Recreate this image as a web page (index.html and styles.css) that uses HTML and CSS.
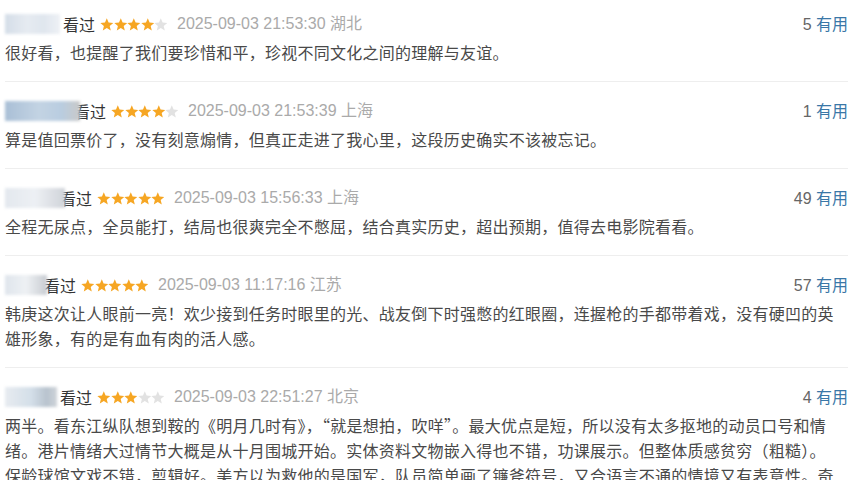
FILE: index.html
```html
<!DOCTYPE html>
<html lang="zh-CN">
<head>
  <meta charset="UTF-8" />
  <title>短评</title>
  <link rel="stylesheet" href="styles.css">
</head>
<body>
  <svg width="0" height="0" style="position:absolute">
    <symbol id="star" viewBox="0 0 13.6 13">
      <polygon points="6.8,0.2 8.6,4.52 13.27,4.9 9.71,7.95 10.8,12.5 6.8,10.06 2.8,12.5 3.89,7.95 0.33,4.9 5,4.52" />
    </symbol>
  </svg>

  <div class="comment-list">
    <!-- 1 -->
    <div class="comment-item">
      <div class="comment-info">
        <span class="user user-1"></span>
        <span class="watched">看过</span>
        <span class="stars">
          <svg class="star on"><use href="#star"/></svg><svg class="star on"><use href="#star"/></svg><svg class="star on"><use href="#star"/></svg><svg class="star on"><use href="#star"/></svg><svg class="star"><use href="#star"/></svg>
        </span>
        <span class="time">2025-09-03 21:53:30 湖北</span>
        <span class="votes"><span class="count">5</span> <a class="useful">有用</a></span>
      </div>
      <p class="text">很好看，也提醒了我们要珍惜和平，珍视不同文化之间的理解与友谊。</p>
    </div>

    <!-- 2 -->
    <div class="comment-item">
      <div class="comment-info">
        <span class="user user-2"></span>
        <span class="watched">看过</span>
        <span class="stars">
          <svg class="star on"><use href="#star"/></svg><svg class="star on"><use href="#star"/></svg><svg class="star on"><use href="#star"/></svg><svg class="star on"><use href="#star"/></svg><svg class="star"><use href="#star"/></svg>
        </span>
        <span class="time">2025-09-03 21:53:39 上海</span>
        <span class="votes"><span class="count">1</span> <a class="useful">有用</a></span>
      </div>
      <p class="text">算是值回票价了，没有刻意煽情，但真正走进了我心里，这段历史确实不该被忘记。</p>
    </div>

    <!-- 3 -->
    <div class="comment-item">
      <div class="comment-info">
        <span class="user user-3"></span>
        <span class="watched">看过</span>
        <span class="stars">
          <svg class="star on"><use href="#star"/></svg><svg class="star on"><use href="#star"/></svg><svg class="star on"><use href="#star"/></svg><svg class="star on"><use href="#star"/></svg><svg class="star on"><use href="#star"/></svg>
        </span>
        <span class="time">2025-09-03 15:56:33 上海</span>
        <span class="votes"><span class="count">49</span> <a class="useful">有用</a></span>
      </div>
      <p class="text">全程无尿点，全员能打，结局也很爽完全不憋屈，结合真实历史，超出预期，值得去电影院看看。</p>
    </div>

    <!-- 4 -->
    <div class="comment-item">
      <div class="comment-info">
        <span class="user user-4"></span>
        <span class="watched">看过</span>
        <span class="stars">
          <svg class="star on"><use href="#star"/></svg><svg class="star on"><use href="#star"/></svg><svg class="star on"><use href="#star"/></svg><svg class="star on"><use href="#star"/></svg><svg class="star on"><use href="#star"/></svg>
        </span>
        <span class="time">2025-09-03 11:17:16 江苏</span>
        <span class="votes"><span class="count">57</span> <a class="useful">有用</a></span>
      </div>
      <p class="text">韩庚这次让人眼前一亮！欢少接到任务时眼里的光、战友倒下时强憋的红眼圈，连握枪的手都带着戏，没有硬凹的英雄形象，有的是有血有肉的活人感。</p>
    </div>

    <!-- 5 -->
    <div class="comment-item">
      <div class="comment-info">
        <span class="user user-5"></span>
        <span class="watched">看过</span>
        <span class="stars">
          <svg class="star on"><use href="#star"/></svg><svg class="star on"><use href="#star"/></svg><svg class="star on"><use href="#star"/></svg><svg class="star"><use href="#star"/></svg><svg class="star"><use href="#star"/></svg>
        </span>
        <span class="time">2025-09-03 22:51:27 北京</span>
        <span class="votes"><span class="count">4</span> <a class="useful">有用</a></span>
      </div>
      <p class="text">两半。看东江纵队想到鞍的《明月几时有》，“就是想拍，吹咩”。最大优点是短，所以没有太多抠地的动员口号和情绪。港片情绪大过情节大概是从十月围城开始。实体资料文物嵌入得也不错，功课展示。但整体质感贫穷（粗糙）。保龄球馆文戏不错，剪辑好。美方以为救他的是国军，队员简单画了镰斧符号，又合语言不通的情境又有表意性。奇葩的是结尾还有一段。</p>
    </div>
  </div>
</body>
</html>
```

FILE: styles.css
```css
body {
  margin: 0;
  background: #fff;
  font-family: "Liberation Sans", "Noto Sans CJK SC", sans-serif;
  font-size: 16px;
  color: #333;
  overflow: hidden;
}

.comment-list {
  width: 843px;
  padding-left: 5px;
}

.comment-item {
  padding: 17px 0 16px;
  border-bottom: 1px solid #eee;
}

.comment-item:first-child {
  padding-top: 12px;
}

.comment-info {
  display: flex;
  align-items: center;
  height: 24px;
  line-height: 24px;
  margin-bottom: 4px;
  white-space: nowrap;
}

.user {
  height: 20px;
  margin-right: 3px;
  filter: blur(1.5px);
  position: relative;
}

.user-1 { width: 55px; background: linear-gradient(90deg, #d4dde8 0%, #e6ebf1 40%, #dfe6ee 70%, #eef1f5 100%); }
.user-2 { width: 75px; margin-right: -6px; background: linear-gradient(90deg, #a9bfd6 0%, #c3d3e3 45%, #b9cde0 75%, #c9c9c9 100%); }
.user-3 { width: 60px; margin-right: -5px; background: linear-gradient(90deg, #e3e8ee 0%, #edf0f4 50%, #cfd3d9 100%); }
.user-4 { width: 42px; margin-right: -3px; background: linear-gradient(90deg, #dfe5ec 0%, #eef1f4 50%, #c8ccd2 100%); }
.user-5 { width: 52px; background: linear-gradient(90deg, #e7ebf0 0%, #d4dfe9 50%, #b8c3ce 80%, #cfd4d9 100%); }

.watched {
  font-family: "Noto Sans CJK SC", sans-serif;
  color: #333;
}

.stars {
  display: flex;
  margin-left: 5px;
  margin-right: 9px;
}

.star {
  width: 13.6px;
  height: 13px;
  fill: #e2e2e2;
}

.star.on {
  fill: #f6a623;
}

.time {
  color: #aaa;
}

.votes {
  margin-left: auto;
  color: #666;
}

.useful {
  color: #3a77a7;
  font-family: "Noto Sans CJK SC", sans-serif;
}

.text {
  margin: 0;
  padding-right: 10px;
  font-family: "Noto Sans CJK SC", sans-serif;
  line-height: 25px;
  letter-spacing: 0.25px;
  color: #494949;
}
```
